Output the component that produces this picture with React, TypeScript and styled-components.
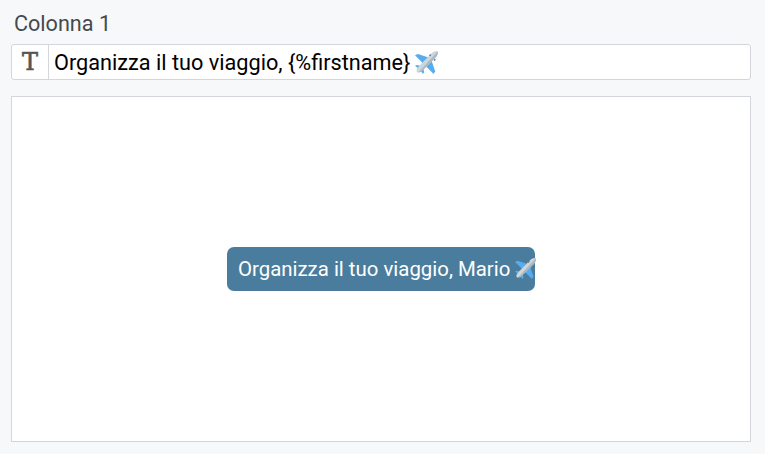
import { FC } from "react";
import styled, { createGlobalStyle } from "styled-components";

const GlobalStyle = createGlobalStyle`
  html, body {
    margin: 0;
    padding: 0;
    background: #f7f8fa;
    font-family: Roboto, "Liberation Sans", sans-serif;
  }
`;

const PlaneIcon: FC<{ size: number }> = ({ size }) => (
  <PlaneSvg viewBox="0 0 24 24" width={size} height={size} aria-hidden="true">
    <path d="M0 4.5 3 3l12 4-6 6.5z" fill="#55acee" />
    <path d="M19.5 24 21 21 17 9l-6.5 6z" fill="#55acee" />
    <path d="M0 15.5 2 14.5l6 1.5-3 3.5z" fill="#55acee" />
    <path d="M8.5 24 9.5 22 8 16l-3.5 3z" fill="#55acee" />
    <path
      d="M23.6.4c-1.4-.8-4.2.2-6.4 2.1L4.2 15.6c-1.6 1.7-2.6 3.6-2.6 4.9 0 1.1.8 1.9 1.9 1.9 1.3 0 3.2-1 4.9-2.6L21.5 6.8c1.9-2.2 2.9-5 2.1-6.4z"
      fill="#ccd6dd"
    />
    <path d="M23.6.4c.8 1.4-.2 4.2-2.1 6.4L8.4 19.8c-1.7 1.6-3.6 2.6-4.9 2.6z" fill="#a9b8c2" />
    <path d="M14.6 4.6 16 3.2l1 1-1.4 1.4zM19.4 9.4l1.4-1.4 1 1-1.4 1.4z" fill="#66757f" />
  </PlaneSvg>
);

export default function App() {
  return (
    <>
      <GlobalStyle />
      <Page>
        <ColumnLabel>Colonna 1</ColumnLabel>
        <InputGroup>
          <TypeCell>T</TypeCell>
          <InputText>
            Organizza il tuo viaggio, {"{%firstname}"}
            <PlaneIcon size={23} />
          </InputText>
        </InputGroup>
        <PreviewPanel>
          <PreviewButton>
            Organizza il tuo viaggio, Mario
            <PlaneIcon size={21} />
          </PreviewButton>
        </PreviewPanel>
      </Page>
    </>
  );
}

const Page = styled.div`
  width: 765px;
  height: 454px;
  box-sizing: border-box;
  padding: 12px 14px 12px 11px;
  display: flex;
  flex-direction: column;
  overflow: hidden;
`;

const ColumnLabel = styled.div`
  height: 32px;
  padding-left: 3px;
  font-size: 21.6px;
  line-height: 24px;
  color: #444a4f;
`;

const InputGroup = styled.div`
  height: 36px;
  box-sizing: border-box;
  display: flex;
  flex: none;
  background: #fff;
  border: 1px solid #d3d6da;
  border-radius: 3px;
`;

const TypeCell = styled.div`
  width: 37px;
  flex: none;
  box-sizing: border-box;
  display: flex;
  align-items: center;
  justify-content: center;
  border-right: 1px solid #d3d6da;
  font-family: "DejaVu Serif", serif;
  font-size: 24px;
  color: #555;
  -webkit-text-stroke: 0.6px #555;
`;

const InputText = styled.div`
  display: flex;
  align-items: center;
  padding-left: 5px;
  font-size: 21.7px;
  color: #000;
  white-space: nowrap;
`;

const PreviewPanel = styled.div`
  height: 346px;
  margin-top: 16px;
  box-sizing: border-box;
  flex: none;
  display: flex;
  align-items: center;
  justify-content: center;
  background: #fff;
  border: 1px solid #d3d6da;
`;

const PreviewButton = styled.div`
  width: 308px;
  height: 44px;
  box-sizing: border-box;
  margin-top: -1px;
  padding-left: 11px;
  display: flex;
  align-items: center;
  background: #4a7d9d;
  border-radius: 7px;
  color: #fff;
  font-size: 20.4px;
  white-space: nowrap;
`;

const PlaneSvg = styled.svg`
  flex: none;
  margin-left: 5px;
`;
